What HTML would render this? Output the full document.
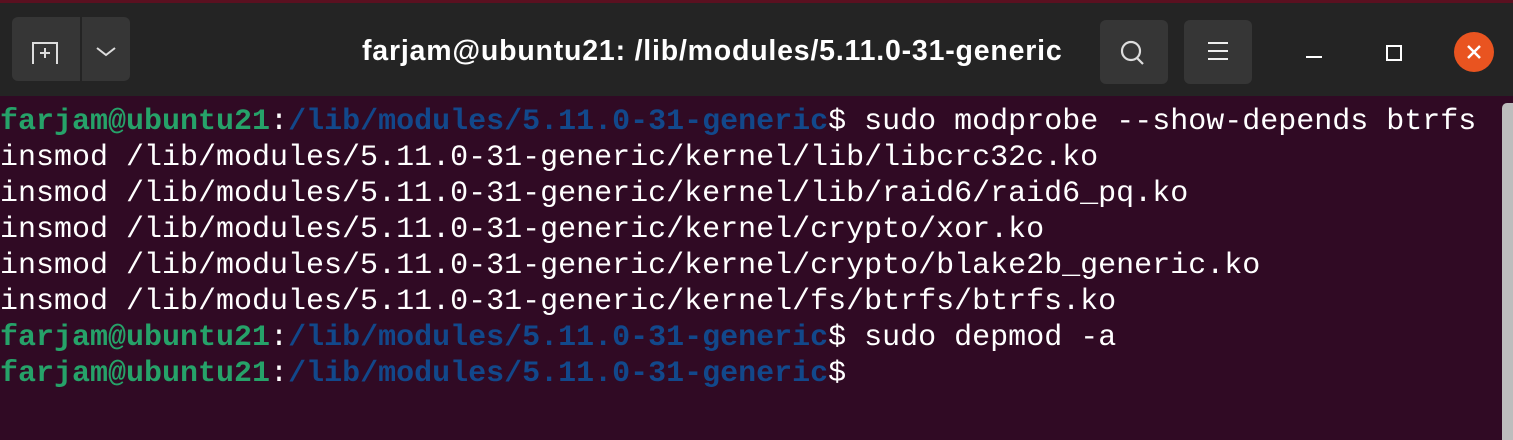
<!DOCTYPE html>
<html><head><style>
body{margin:0;width:1513px;height:440px;overflow:hidden;background:#300a24;font-family:"Liberation Sans",sans-serif}
#hdr{position:absolute;left:0;top:0;width:1513px;height:96px;background:#242424;border-top:3px solid #5a1020;box-sizing:border-box}
.btn{position:absolute;background:#363636;border-radius:6px}
#title{position:absolute;left:362px;top:32px;white-space:nowrap;color:#fff;font-weight:bold;font-size:28.5px;letter-spacing:0.8px}
#term{position:absolute;left:0;top:104px;font-family:"Liberation Mono",monospace;font-size:30px;line-height:36px;color:#fff;white-space:pre}
.g{color:#26a269;font-weight:bold}.b{color:#12488b;font-weight:bold}
#sb{position:absolute;left:1502px;top:103px;width:11px;height:337px;background:#bdbdbd;border-radius:5px 0 0 0}
</style></head><body>
<div id="hdr">
<div class="btn" style="left:12px;top:14px;width:118px;height:64px"></div>
<div style="position:absolute;left:80px;top:14px;width:2px;height:64px;background:#242424"></div>
<svg style="position:absolute;left:30px;top:36px" width="36" height="26" fill="none" stroke="#ddd" stroke-width="2"><path d="M3 25V4H27V25"/><path d="M15 9V19M10 14H20"/></svg>
<svg style="position:absolute;left:95px;top:43px" width="24" height="14" fill="none" stroke="#ddd" stroke-width="2"><path d="M2 2L11 9L20 2"/></svg>
<div id="title">farjam@ubuntu21: /lib/modules/5.11.0-31-generic</div>
<div class="btn" style="left:1100px;top:17px;width:68px;height:64px"></div>
<svg style="position:absolute;left:1118px;top:35px" width="32" height="30" fill="none" stroke="#ddd" stroke-width="2.2"><circle cx="13" cy="13" r="9"/><path d="M19 20L25 26"/></svg>
<div class="btn" style="left:1184px;top:17px;width:68px;height:64px"></div>
<svg style="position:absolute;left:1206px;top:38px" width="26" height="20" stroke="#eee" stroke-width="2"><path d="M2 2H22M2 10H22M2 18H22"/></svg>
<div style="position:absolute;left:1306px;top:53px;width:16px;height:2px;background:#fff"></div>
<div style="position:absolute;left:1386px;top:42px;width:12px;height:12px;border:2px solid #fff"></div>
<div style="position:absolute;left:1454px;top:29px;width:40px;height:40px;border-radius:50%;background:#e95420"></div>
<svg style="position:absolute;left:1464px;top:39px" width="20" height="20" stroke="#fff" stroke-width="2.5"><path d="M4 4L16 16M16 4L4 16"/></svg>
</div>
<div id="term"><span class="g">farjam@ubuntu21</span>:<span class="b">/lib/modules/5.11.0-31-generic</span>$ sudo modprobe --show-depends btrfs
insmod /lib/modules/5.11.0-31-generic/kernel/lib/libcrc32c.ko
insmod /lib/modules/5.11.0-31-generic/kernel/lib/raid6/raid6_pq.ko
insmod /lib/modules/5.11.0-31-generic/kernel/crypto/xor.ko
insmod /lib/modules/5.11.0-31-generic/kernel/crypto/blake2b_generic.ko
insmod /lib/modules/5.11.0-31-generic/kernel/fs/btrfs/btrfs.ko
<span class="g">farjam@ubuntu21</span>:<span class="b">/lib/modules/5.11.0-31-generic</span>$ sudo depmod -a
<span class="g">farjam@ubuntu21</span>:<span class="b">/lib/modules/5.11.0-31-generic</span>$</div>
<div id="sb"></div>
</body></html>
